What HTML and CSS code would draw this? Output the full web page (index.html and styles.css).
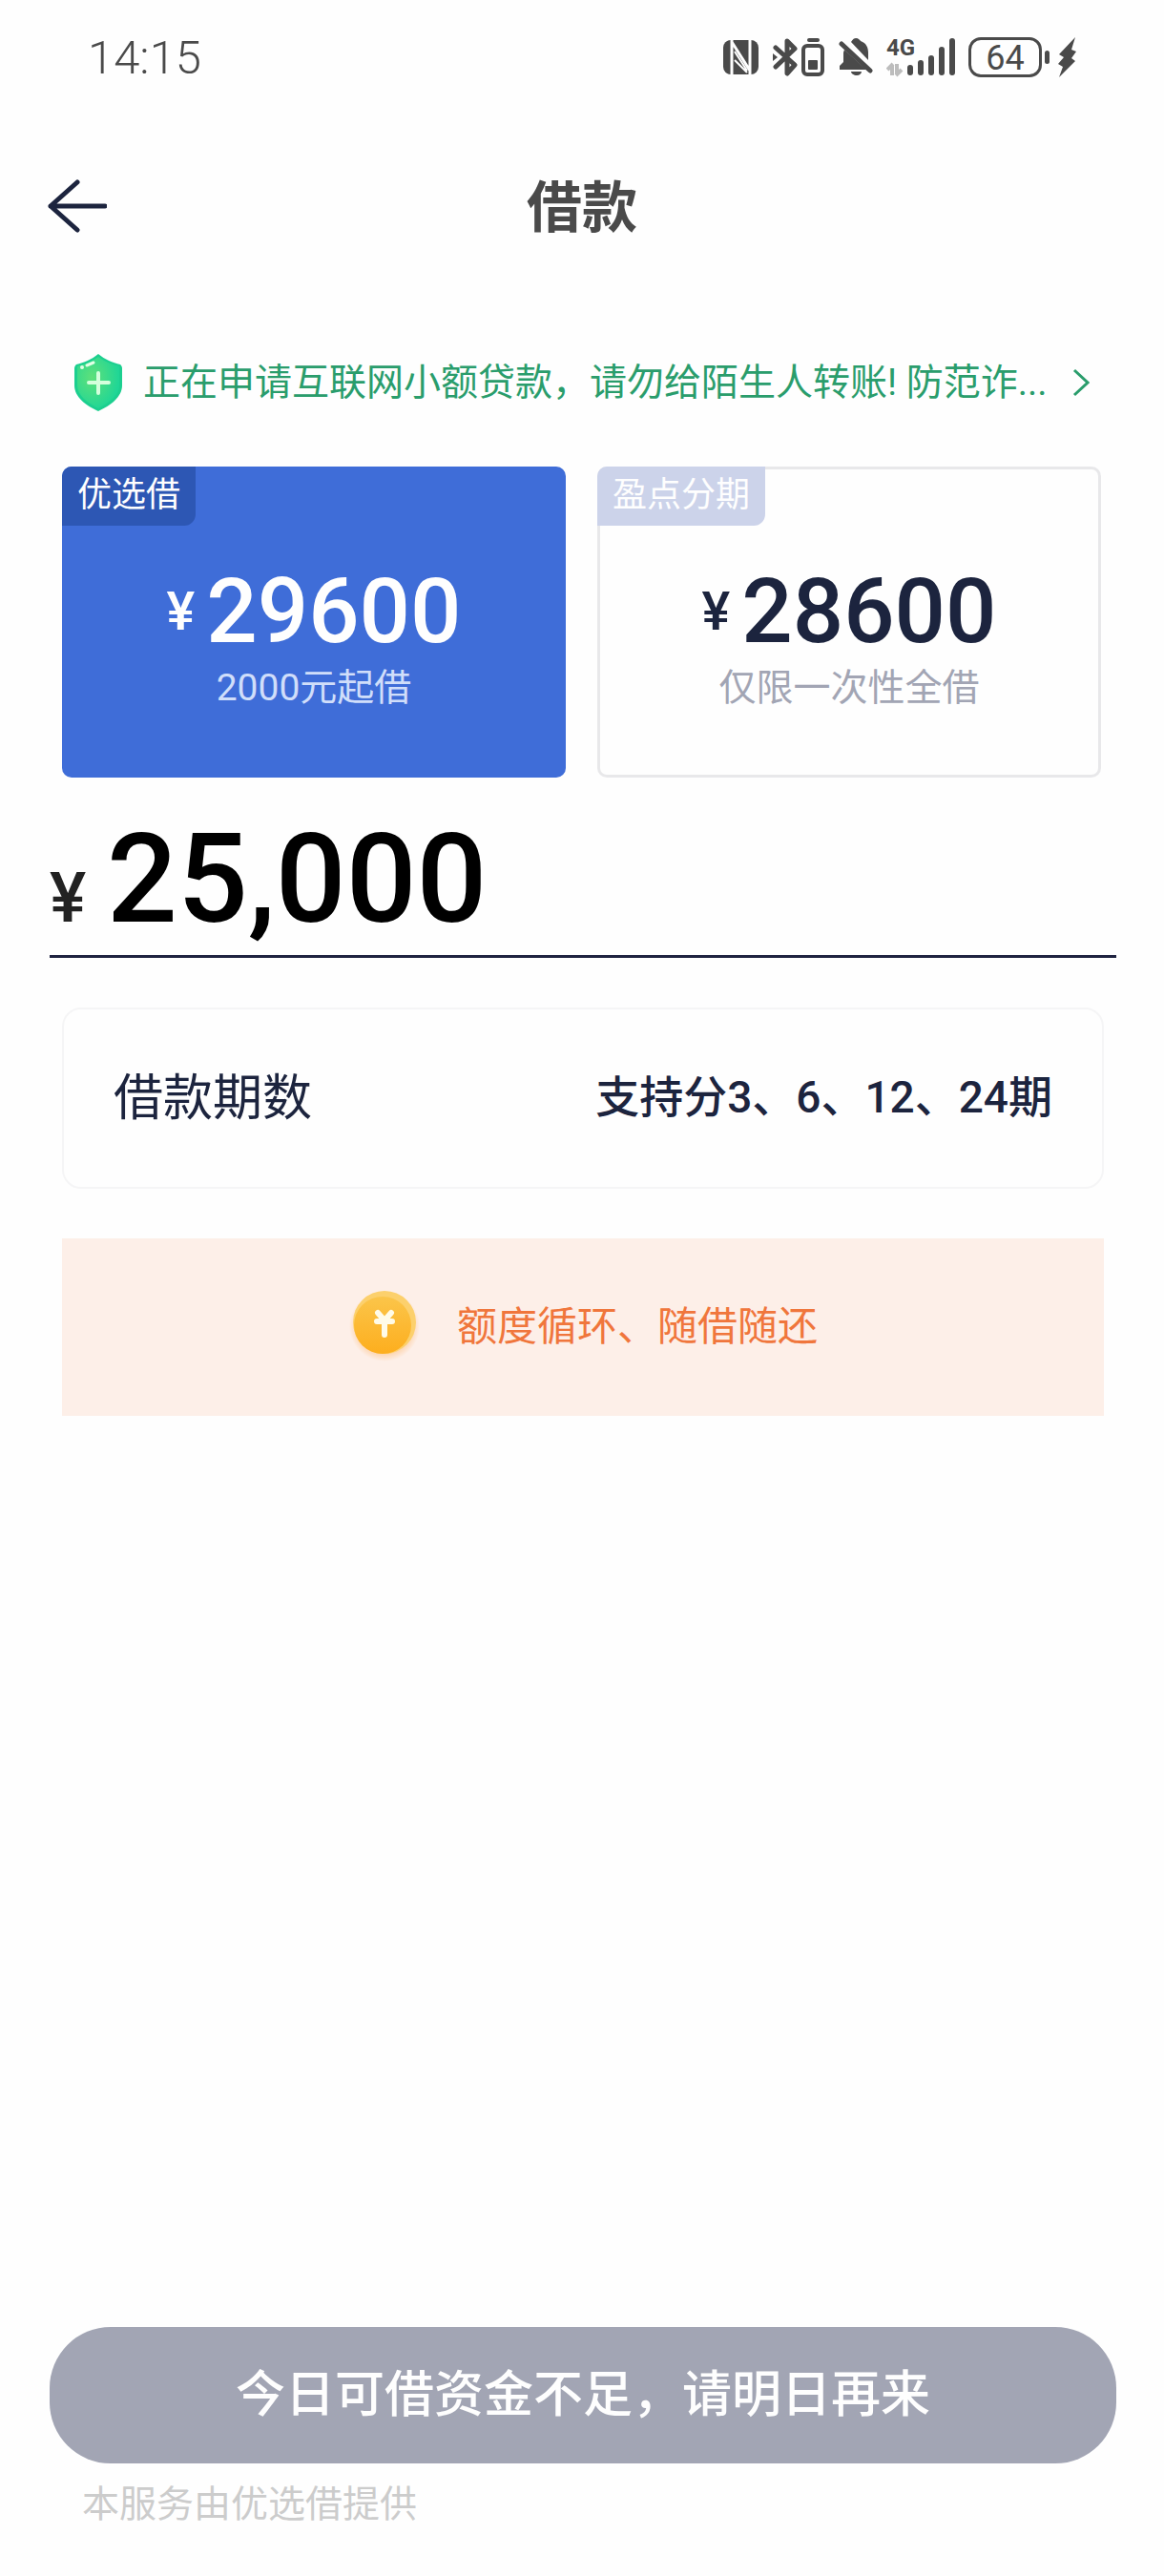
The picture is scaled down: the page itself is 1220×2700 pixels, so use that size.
FILE: index.html
```html
<!DOCTYPE html>
<html lang="zh-CN">
<head>
    <meta charset="UTF-8">
    <meta name="viewport" content="width=device-width, initial-scale=1.0">
    <title>借款</title>
    <link rel="stylesheet" href="styles.css">
</head>
<body>
    <div class="status-bar">
        <span class="time">14:15</span>
        <div class="status-icons">
            <!-- NFC -->
            <svg width="38" height="42" viewBox="0 0 38 42">
                <rect x="0" y="3" width="37" height="36" rx="8" fill="#4a4a4a"/>
                <path d="M9 2v38M28 2v38M9 5l19 30" fill="none" stroke="#fefefe" stroke-width="3"/>
                <path d="M12 15l13 20M12 24l13 13" fill="none" stroke="#fefefe" stroke-width="2"/>
            </svg>
            <!-- Bluetooth -->
            <svg class="bluetooth" width="26" height="42" viewBox="0 0 26 42">
                <path d="M3 11l20 18-8 9V4l8 8L3 31" fill="none" stroke="#4a4a4a" stroke-width="5" stroke-linejoin="round" stroke-linecap="round"/>
                <path d="M0 17l5 4-5 4z" fill="#4a4a4a"/>
            </svg>
            <svg class="device-battery" width="26" height="42" viewBox="0 0 26 42">
                <rect x="7" y="1" width="13" height="4" rx="2" fill="#4a4a4a"/>
                <rect x="3" y="9" width="20" height="30" rx="4" fill="none" stroke="#4a4a4a" stroke-width="4"/>
                <rect x="8" y="24" width="10" height="10" rx="1" fill="#4a4a4a"/>
            </svg>
            <!-- Muted bell -->
            <svg class="bell" width="36" height="42" viewBox="0 0 36 42">
                <path d="M13 5c1-1 2-4 5-4s4 2 5 3c6 2 8 7 8 12v8z" fill="#4a4a4a"/>
                <path d="M6 13l23 21H1v-4l4-4V16zM13 36h11c0 2-2 4-5 4s-6-2-6-4z" fill="#4a4a4a"/>
                <path d="M3 7l30 28" stroke="#4a4a4a" stroke-width="5" stroke-linecap="round"/>
            </svg>
            <div class="signal">
                <span class="network">4G</span>
                <svg width="72" height="42" viewBox="0 0 72 42">
                    <path d="M6 40V29M1 34l6-6M11 28v11M10 40l6-6" fill="none" stroke="#bdbdbd" stroke-width="4"/>
                    <path d="M25 32v5M36 27v10M47 22v15M58 13v24M69 4v33" stroke="#4a4a4a" stroke-width="6" stroke-linecap="round"/>
                </svg>
            </div>
            <div class="battery">
                <span class="battery-level">64</span>
                <span class="battery-tip"></span>
            </div>
            <svg class="bolt" width="20" height="42" viewBox="0 0 20 42">
                <path d="M18 0L1 18l5 3-6 7 5 3-4 11 17-17-4-3 5-7-5-2z" fill="#4a4a4a"/>
            </svg>
        </div>
    </div>

    <header class="nav-bar">
        <button class="back" type="button" aria-label="返回">
            <svg width="62" height="56" viewBox="0 0 62 56">
                <path d="M31 3L3 28l28 25M3 28h57" fill="none" stroke="#1c243e" stroke-width="5" stroke-linecap="round" stroke-linejoin="round"/>
            </svg>
        </button>
        <h1>借款</h1>
    </header>

    <main>
        <a class="notice" href="#">
            <svg width="50" height="60" viewBox="0 0 50 60">
                <defs>
                    <radialGradient id="shield" cx="35%" cy="40%" r="65%">
                        <stop offset="0" stop-color="#5fe07a"/>
                        <stop offset="1" stop-color="#1fd696"/>
                    </radialGradient>
                </defs>
                <path d="M25 0c7 6 15 9 23 11 1 1 2 2 2 4v18c0 12-12 21-25 27C12 54 0 45 0 33V15c0-2 1-3 2-4C10 9 18 6 25 0z" fill="#1ccf8f"/>
                <path d="M25 3c7 5 14 8 22 10v20c0 11-11 18-22 24C14 51 3 44 3 33V13c8-2 15-5 22-10z" fill="url(#shield)"/>
                <path d="M25 20v21M15 30h21" stroke="#d5ffdc" stroke-width="4" stroke-linecap="round"/>
                <path d="M13 12l7-3" stroke="#e2ffe6" stroke-width="3" stroke-linecap="round"/>
                <circle cx="8" cy="14" r="2" fill="#e2ffe6"/>
            </svg>
            <span class="notice-text">正在申请互联网小额贷款，请勿给陌生人转账! 防范诈...</span>
            <svg width="18" height="30" viewBox="0 0 18 30">
                <path d="M2 2l14 13L2 28" fill="none" stroke="#2a9d6c" stroke-width="3"/>
            </svg>
        </a>

        <div class="products">
            <button class="product active" type="button">
                <span class="tag">优选借</span>
                <span class="quota"><span class="yen">¥</span>29600</span>
                <span class="desc">2000元起借</span>
            </button>
            <button class="product" type="button">
                <span class="tag">盈点分期</span>
                <span class="quota"><span class="yen">¥</span>28600</span>
                <span class="desc">仅限一次性全借</span>
            </button>
        </div>

        <div class="amount">
            <label for="amount">¥</label>
            <input id="amount" type="text" inputmode="numeric" value="25,000">
        </div>

        <div class="periods">
            <span>借款期数</span>
            <span class="periods-value">支持分3、6、12、24期</span>
        </div>

        <div class="banner">
            <svg width="76" height="86" viewBox="0 0 76 86">
                <defs>
                    <linearGradient id="coin" x1="0" y1="0" x2="0" y2="1">
                        <stop offset="0" stop-color="#fbc54a"/>
                        <stop offset="1" stop-color="#fdae1e"/>
                    </linearGradient>
                    <radialGradient id="glow">
                        <stop offset="70%" stop-color="#fdb56a" stop-opacity="0.6"/>
                        <stop offset="1" stop-color="#fdb56a" stop-opacity="0"/>
                    </radialGradient>
                </defs>
                <circle cx="38" cy="47" r="37" fill="url(#glow)"/>
                <circle cx="38" cy="43" r="33" fill="#fcd06c"/>
                <circle cx="36" cy="46" r="30" fill="url(#coin)"/>
                <path d="M31 33l7 8 7-8M30 42h16M38 42v14" fill="none" stroke="#fffbe8" stroke-width="6" stroke-linecap="round" stroke-linejoin="round"/>
            </svg>
            <span>额度循环、随借随还</span>
        </div>
    </main>

    <footer>
        <button class="submit" type="button">今日可借资金不足，请明日再来</button>
        <p>本服务由优选借提供</p>
    </footer>
</body>
</html>
```
FILE: styles.css
```css
* {
    box-sizing: border-box;
}
body {
    display: flex;
    flex-direction: column;
    min-height: 100vh;
    margin: 0;
    background-color: #fefefe;
    color: #1c243e;
    font-family: Roboto, "Noto Sans CJK SC", sans-serif;
}
button {
    padding: 0;
    border: 0;
    background: none;
    color: inherit;
    font-family: inherit;
    cursor: pointer;
}
svg {
    display: block;
    flex: none;
}

/* Status bar */
.status-bar {
    display: flex;
    justify-content: space-between;
    align-items: center;
    height: 120px;
    padding: 0 91px 0 92px;
    color: #4a4a4a;
}
.time {
    font-size: 49px;
    font-weight: 300;
}
.status-icons {
    display: flex;
    align-items: center;
}
.bluetooth {
    margin-left: 14px;
}
.device-battery {
    margin-left: 3px;
}
.bell {
    margin-left: 14px;
}
.signal {
    position: relative;
    margin-left: 14px;
}
.network {
    position: absolute;
    top: 0;
    left: 0;
    font-size: 24px;
    font-weight: 700;
    line-height: 22px;
}
.battery {
    display: flex;
    align-items: center;
    gap: 3px;
    margin-left: 14px;
}
.battery-level {
    width: 77px;
    height: 42px;
    border: 3px solid #4a4a4a;
    border-radius: 13px;
    font-size: 36px;
    line-height: 38px;
    text-align: center;
}
.battery-tip {
    width: 5px;
    height: 14px;
    border-radius: 3px;
    background-color: #4a4a4a;
}
.bolt {
    margin-left: 9px;
}

/* Title */
.nav-bar {
    display: flex;
    justify-content: center;
    align-items: center;
    position: relative;
    height: 192px;
}
.nav-bar h1 {
    margin: 4px 0 0;
    color: #4a4a4a;
    font-size: 58px;
    line-height: 80px;
}
.back {
    position: absolute;
    left: 50px;
}

main {
    display: flex;
    flex-direction: column;
    padding: 0 50px 0 52px;
}
.notice {
    display: flex;
    align-items: center;
    height: 60px;
    margin: 59px 28px 58px 26px;
    color: #2a9d6c;
    font-size: 39px;
    line-height: 60px;
    text-decoration: none;
}
.notice-text {
    flex: 1;
    margin-left: 22px;
    white-space: nowrap;
}

/* Product cards */
.products {
    display: grid;
    grid-template-columns: 1fr 1fr;
    gap: 33px;
    padding: 0 16px 0 13px;
}
.product {
    display: flex;
    flex-direction: column;
    align-items: center;
    position: relative;
    height: 326px;
    padding-top: 98px;
    border-radius: 10px;
    box-shadow: inset 0 0 0 3px #e8e8ea;
    overflow: hidden;
}
.tag {
    position: absolute;
    top: 0;
    left: 0;
    height: 62px;
    padding: 0 16px;
    border-bottom-right-radius: 12px;
    background-color: #ccd3ea;
    color: #fefefe;
    font-size: 36px;
    line-height: 60px;
}
.quota {
    display: flex;
    align-items: center;
    gap: 12px;
    font-size: 94px;
    font-weight: 500;
    line-height: 108px;
}
.yen {
    font-size: 56px;
}
.desc {
    color: #a2a5b4;
    font-size: 39px;
    line-height: 52px;
}
.active {
    background-color: #3f6dd8;
    box-shadow: none;
    color: #fefefe;
}
.active .tag {
    background-color: #2d57b4;
}
.active .desc {
    color: #d0defa;
}

/* Amount */
.amount {
    display: flex;
    align-items: baseline;
    height: 189px;
    padding-top: 26px;
    border-bottom: 3px solid #1f2340;
}
.amount label {
    width: 60px;
    color: #222;
    font-size: 72px;
    font-weight: 500;
}
.amount input {
    flex: 1;
    min-width: 0;
    height: 160px;
    padding: 0;
    border: 0;
    outline: 0;
    background: none;
    color: #000;
    font-family: inherit;
    font-size: 130px;
    font-weight: 500;
}

.periods {
    display: flex;
    justify-content: space-between;
    align-items: center;
    height: 190px;
    margin: 52px 13px;
    padding: 0 52px 10px;
    border: 2px solid #f5f5f6;
    border-radius: 20px;
    font-size: 52px;
}
.periods-value {
    font-size: 46px;
    font-weight: 500;
}
.banner {
    display: flex;
    justify-content: center;
    align-items: center;
    gap: 38px;
    height: 186px;
    margin: 0 13px;
    padding-bottom: 10px;
    background-color: #fdefe8;
    color: #f0763c;
    font-size: 42px;
}

/* Bottom button */
footer {
    margin-top: auto;
    padding: 0 50px 49px 52px;
}
.submit {
    width: 100%;
    height: 143px;
    padding-bottom: 10px;
    border-radius: 64px;
    background-color: #a2a5b4;
    color: #fefefe;
    font-size: 52px;
    font-weight: 500;
}
footer p {
    margin: 17px 0 0 34px;
    color: #ccc;
    font-size: 39px;
    line-height: 52px;
}
```
